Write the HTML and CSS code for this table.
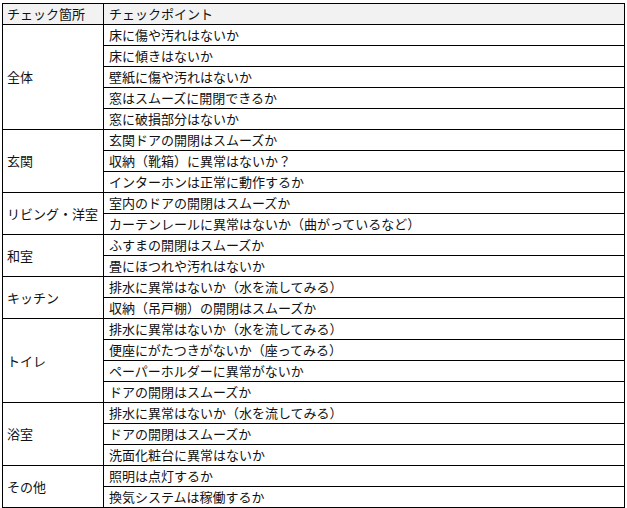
FILE: index.html
```html
<!DOCTYPE html>
<html lang="ja">
<head>
<meta charset="utf-8">
<link rel="stylesheet" href="styles.css">
</head>
<body>
<table class="check">
<colgroup><col class="c1"><col class="c2"></colgroup>
<thead>
<tr><th>チェック箇所</th><th>チェックポイント</th></tr>
</thead>
<tbody>
<tr><td rowspan="5" class="cat">全体</td><td>床に傷や汚れはないか</td></tr>
<tr><td>床に傾きはないか</td></tr>
<tr><td>壁紙に傷や汚れはないか</td></tr>
<tr><td>窓はスムーズに開閉できるか</td></tr>
<tr><td>窓に破損部分はないか</td></tr>
<tr><td rowspan="3" class="cat">玄関</td><td>玄関ドアの開閉はスムーズか</td></tr>
<tr><td>収納（靴箱）に異常はないか？</td></tr>
<tr><td>インターホンは正常に動作するか</td></tr>
<tr><td rowspan="2" class="cat">リビング・洋室</td><td>室内のドアの開閉はスムーズか</td></tr>
<tr><td>カーテンレールに異常はないか（曲がっているなど）</td></tr>
<tr><td rowspan="2" class="cat">和室</td><td>ふすまの開閉はスムーズか</td></tr>
<tr><td>畳にほつれや汚れはないか</td></tr>
<tr><td rowspan="2" class="cat">キッチン</td><td>排水に異常はないか（水を流してみる）</td></tr>
<tr><td>収納（吊戸棚）の開閉はスムーズか</td></tr>
<tr><td rowspan="4" class="cat">トイレ</td><td>排水に異常はないか（水を流してみる）</td></tr>
<tr><td>便座にがたつきがないか（座ってみる）</td></tr>
<tr><td>ペーパーホルダーに異常がないか</td></tr>
<tr><td>ドアの開閉はスムーズか</td></tr>
<tr><td rowspan="3" class="cat">浴室</td><td>排水に異常はないか（水を流してみる）</td></tr>
<tr><td>ドアの開閉はスムーズか</td></tr>
<tr><td>洗面化粧台に異常はないか</td></tr>
<tr><td rowspan="2" class="cat">その他</td><td>照明は点灯するか</td></tr>
<tr><td>換気システムは稼働するか</td></tr>
</tbody>
</table>
</body>
</html>
```
FILE: styles.css
```css
html, body {
  margin: 0;
  padding: 0;
  background: #ffffff;
}
body {
  padding: 3px 0 0 2px;
  font-family: "Noto Sans CJK JP", "Noto Sans", sans-serif;
  font-size: 13px;
  color: #111111;
}
.check {
  border-collapse: collapse;
  table-layout: fixed;
  width: 623px;
}
.c1 { width: 101px; }
.c2 { width: 521px; }
.check th,
.check td {
  border: 1px solid #000000;
  height: 20px;
  line-height: 20px;
  padding: 0 0 0 4px;
  text-align: left;
  font-weight: normal;
  white-space: nowrap;
  overflow: hidden;
}
.check td + td,
.check th + th {
  padding-left: 5px;
}
.check tbody tr td:only-child {
  padding-left: 5px;
}
.check thead th {
  background: #f2f2f2;
}
.check .cat {
  vertical-align: middle;
}
```
